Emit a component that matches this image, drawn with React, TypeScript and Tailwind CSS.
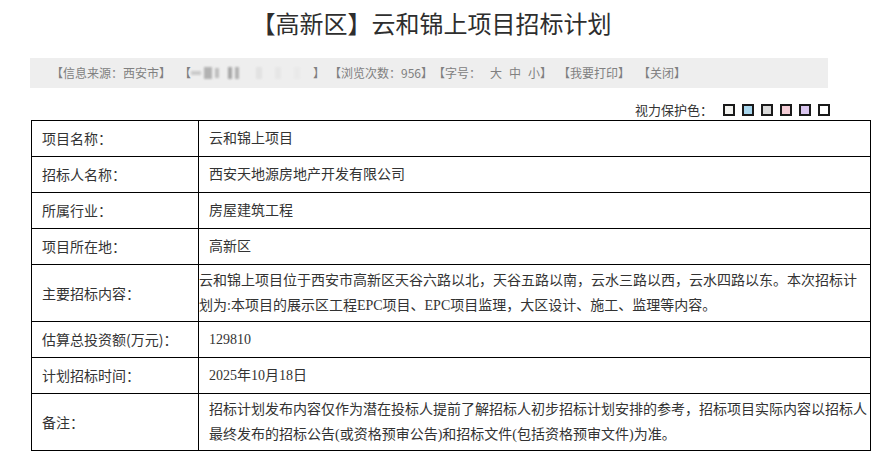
const cjk = { fontFamily: '"Noto Sans CJK SC", "Noto Sans", sans-serif' };
const mixed = { fontFamily: '"Liberation Serif", "Noto Sans CJK SC", serif' };

const swatches = ['#f3f3f0', '#a9d7ee', '#d9d9d9', '#f4cdd6', '#dac6ef', '#ffffff'];

interface Row {
  label: string;
  lines: string[];
  tall?: boolean;
  flush?: boolean;
}

const rows: Row[] = [
  { label: '项目名称：', lines: ['云和锦上项目'] },
  { label: '招标人名称：', lines: ['西安天地源房地产开发有限公司'] },
  { label: '所属行业：', lines: ['房屋建筑工程'] },
  { label: '项目所在地：', lines: ['高新区'] },
  {
    label: '主要招标内容：',
    tall: true,
    flush: true,
    lines: [
      '云和锦上项目位于西安市高新区天谷六路以北，天谷五路以南，云水三路以西，云水四路以东。本次招标计',
      '划为:本项目的展示区工程EPC项目、EPC项目监理，大区设计、施工、监理等内容。',
    ],
  },
  { label: '估算总投资额(万元)：', lines: ['129810'] },
  { label: '计划招标时间：', lines: ['2025年10月18日'] },
  {
    label: '备注：',
    tall: true,
    lines: [
      '招标计划发布内容仅作为潜在投标人提前了解招标人初步招标计划安排的参考，招标项目实际内容以招标人',
      '最终发布的招标公告(或资格预审公告)和招标文件(包括资格预审文件)为准。',
    ],
  },
];

function InfoBar() {
  return (
    <div
      className="ml-[30px] flex h-[30px] w-[798px] items-center bg-[#eeeeee] pl-[21px] text-[12px] text-[#808080] whitespace-nowrap"
      style={cjk}
    >
      <span>【信息来源：西安市】</span>
      <span className="ml-[8px]">【</span>
      {/* blurred out in the source */}
      <span className="flex h-[14px] w-[122px] items-center gap-[3px] opacity-70 blur-[1.2px]">
        <span className="h-[4px] w-[10px] bg-[#bbbbbb]" />
        <span className="h-[12px] w-[8px] bg-[#999999]" />
        <span className="h-[10px] w-[4px] bg-[#aaaaaa]" />
        <span className="ml-[6px] h-[12px] w-[4px] bg-[#888888]" />
        <span className="h-[12px] w-[4px] bg-[#999999]" />
        <span className="ml-[14px] h-[12px] w-[6px] bg-[#dddddd]" />
        <span className="ml-[10px] h-[12px] w-[6px] bg-[#e4e4e4]" />
        <span className="ml-[10px] h-[12px] w-[6px] bg-[#e8e8e8]" />
      </span>
      <span>】</span>
      <span className="ml-[4px]">【浏览次数：956】</span>
      <span>【字号：</span>
      <span className="ml-[9px]">大</span>
      <span className="ml-[7px]">中</span>
      <span className="ml-[7px]">小】</span>
      <span className="ml-[6px]">【我要打印】</span>
      <span className="ml-[8px]">【关闭】</span>
    </div>
  );
}

function ProtectColors() {
  return (
    <div className="ml-[30px] mt-[12px] flex h-[20px] w-[800px] items-center justify-end">
      <span className="mr-[10px] text-[13px] text-[#333333]" style={cjk}>
        视力保护色：
      </span>
      <div className="flex gap-[7px]">
        {swatches.map((c) => (
          <span
            key={c}
            className="block h-[12px] w-[12px] border-2 border-[#1a1a1a]"
            style={{ backgroundColor: c }}
          />
        ))}
      </div>
    </div>
  );
}

export default function App() {
  return (
    <div className="min-h-[466px] w-[883px] bg-white">
      <div className="flex h-[44px] items-center justify-center pr-[20px] pt-[2px]">
        <h1 className="text-[24px] font-normal text-[#2e2e2e]" style={cjk}>
          【高新区】云和锦上项目招标计划
        </h1>
      </div>
      <div className="mt-[14px]">
        <InfoBar />
      </div>
      <ProtectColors />
      <table className="ml-[31px] w-[840px] table-fixed border-collapse border border-black text-[14px] text-[#333333]">
        <colgroup>
          <col className="w-[167px]" />
          <col />
        </colgroup>
        <tbody>
          {rows.map((r) => (
            <tr key={r.label} className={r.tall ? 'h-[57px]' : 'h-[36px]'}>
              <td className="whitespace-nowrap border border-black pl-[10px] align-middle" style={cjk}>
                {r.label}
              </td>
              <td
                className={`border border-black align-middle leading-[25px] ${r.flush ? 'pl-0' : 'pl-[10px]'}`}
                style={mixed}
              >
                {r.lines.map((l, i) => (
                  <div key={i} className="whitespace-nowrap">
                    {l}
                  </div>
                ))}
              </td>
            </tr>
          ))}
        </tbody>
      </table>
    </div>
  );
}
